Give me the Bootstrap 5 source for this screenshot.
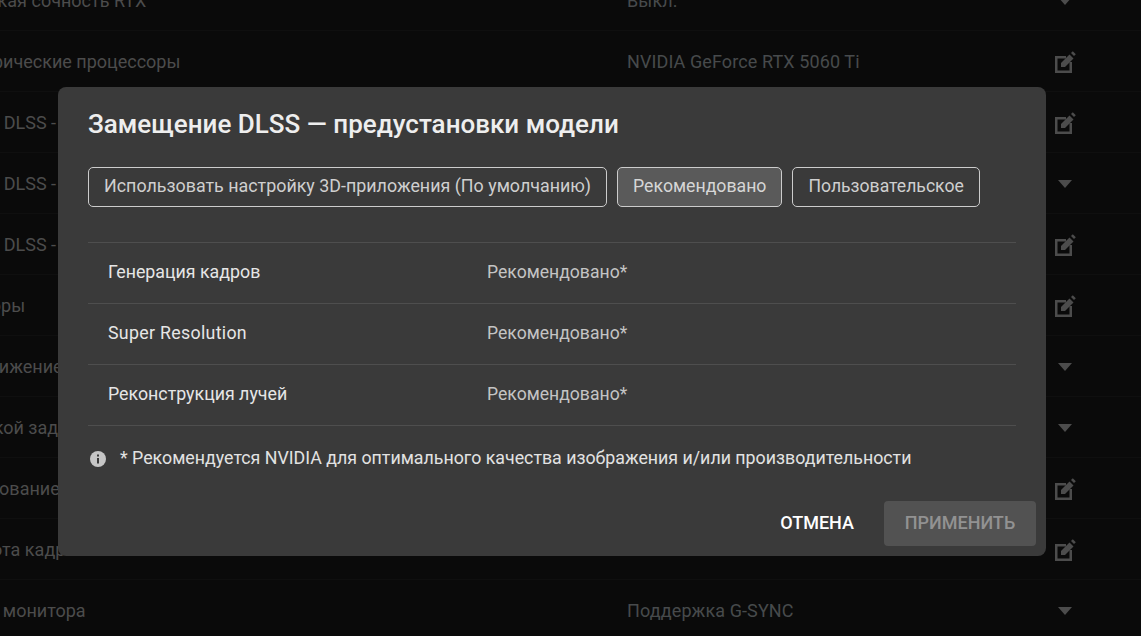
<!DOCTYPE html>
<html lang="ru">
<head>
  <meta charset="UTF-8">
  <meta name="viewport" content="width=device-width, initial-scale=1.0">
  <title>Замещение DLSS</title>
  <link href="https://cdn.jsdelivr.net/npm/bootstrap@5.3.0/dist/css/bootstrap.min.css" rel="stylesheet">
  <style>
    html, body {
      height: 100%;
    }
    body {
      background: #0a0a0a;
      font-family: Roboto, "Liberation Sans", sans-serif;
      overflow: hidden;
    }
    #settings-list {
      margin: -30px 0 0 -99px;
      width: 1240px;
    }
    .setting-row {
      height: 61px;
      border-bottom: 1px solid #0f0f0f;
      color: #4c4c4c;
      font-size: 18px;
    }
    .setting-name {
      width: 726px;
      padding-top: 1px;
      white-space: nowrap;
    }
    .setting-value {
      width: 413px;
      padding-top: 1px;
      color: #474a4c;
      letter-spacing: .1px;
    }
    .setting-icon {
      width: 50px;
      padding-top: 2px;
      fill: #4c4c4c;
    }
    #override-dialog {
      left: 58px;
      top: 87px;
      width: 988px;
      height: 469px;
      padding: 0 10px 10px 30px;
      background: #3a3a3a;
      border-radius: 8px;
    }
    #override-dialog h2 {
      margin: 22px 0 0;
      height: 58px;
      font-size: 26px;
      line-height: 30px;
      font-weight: 500;
      color: #eeeeee;
    }
    .preset-group {
      gap: 10px;
    }
    .preset-btn {
      height: 40px;
      padding: 0 15px 2px;
      font-size: 17.7px;
      color: #cfcfcf;
      border: 1px solid #cccccc;
      border-radius: 5px;
      white-space: nowrap;
    }
    .preset-btn:first-child {
      font-size: 17.87px;
    }
    .preset-btn:last-child {
      font-size: 17.6px;
    }
    .preset-btn.active, .preset-btn:hover {
      background: #5a5a5a;
      color: #d6d6d6;
      border-color: #cccccc;
    }
    #preset-table {
      margin: 35px 20px 0 0;
      border-top: 1px solid #4e4e4e;
    }
    .preset-row {
      height: 61px;
      padding: 0 0 2px 20px;
      border-bottom: 1px solid #4e4e4e;
      font-size: 17.8px;
    }
    .preset-name {
      width: 379px;
      color: #e6e6e6;
    }
    .preset-name-latin {
      letter-spacing: .3px;
    }
    .preset-value {
      color: #c4c4c4;
      font-size: 17.6px;
    }
    #preset-note {
      margin-top: 20px;
      height: 25px;
      gap: 12px;
      font-size: 17.8px;
      color: #e2e2e2;
    }
    #dialog-footer {
      gap: 30px;
    }
    #btn-cancel, #btn-apply {
      font-size: 18px;
      font-weight: 500;
      border: 0;
      border-radius: 4px;
      padding: 0 0 2px;
      height: 45px;
    }
    #btn-cancel {
      color: #ffffff;
    }
    #btn-apply {
      width: 152px;
      background: #525252;
      color: #929292;
      opacity: 1;
    }
  </style>
</head>
<body>

<svg width="0" height="0" class="position-absolute">
  <symbol id="icon-edit" viewBox="0 0 22 22">
    <path d="M1 5h11v2.5H3.5v12h12V11H18v11H1z"/>
    <path d="M7 16v-4l8.5-8.5 4 4L11 16z"/>
    <path d="M17 2l1.8-1.8 3 3L20 5z"/>
  </symbol>
  <symbol id="icon-caret" viewBox="0 0 14 8">
    <path d="M0 0h14L7 8z"/>
  </symbol>
</svg>

<!-- Settings behind the dialog -->
<div id="settings-list"></div>

<!-- Dialog -->
<div id="override-dialog" class="position-absolute d-flex flex-column">
  <h2>Замещение DLSS — предустановки модели</h2>

  <div class="d-flex preset-group">
    <button class="btn preset-btn">Использовать настройку 3D-приложения (По умолчанию)</button>
    <button class="btn preset-btn active">Рекомендовано</button>
    <button class="btn preset-btn">Пользовательское</button>
  </div>

  <div id="preset-table">
    <div class="preset-row d-flex align-items-center">
      <div class="preset-name">Генерация кадров</div>
      <div class="preset-value">Рекомендовано*</div>
    </div>
    <div class="preset-row d-flex align-items-center">
      <div class="preset-name preset-name-latin">Super Resolution</div>
      <div class="preset-value">Рекомендовано*</div>
    </div>
    <div class="preset-row d-flex align-items-center">
      <div class="preset-name">Реконструкция лучей</div>
      <div class="preset-value">Рекомендовано*</div>
    </div>
  </div>

  <div id="preset-note" class="d-flex align-items-center">
    <svg width="20" height="20" viewBox="0 0 20 20" class="flex-shrink-0">
      <circle cx="10" cy="10" r="8" fill="#c6c6c6"/>
      <rect x="9" y="9" width="2" height="5.5" fill="#3a3a3a"/>
      <rect x="9" y="5.5" width="2" height="2" fill="#3a3a3a"/>
    </svg>
    <span>* Рекомендуется NVIDIA для оптимального качества изображения и/или производительности</span>
  </div>

  <div id="dialog-footer" class="d-flex justify-content-end align-items-center mt-auto">
    <button class="btn" id="btn-cancel">ОТМЕНА</button>
    <button class="btn" id="btn-apply" disabled>ПРИМЕНИТЬ</button>
  </div>
</div>

<script>
  // Rows of the settings page under the dialog
  const settings = [
    ['Динамическая сочность RTX', 'Выкл.', 'caret'],
    ['Общие графические процессоры', 'NVIDIA GeForce RTX 5060 Ti', 'edit'],
    ['Замещение DLSS - предустановки', '', 'edit'],
    ['Замещение DLSS - режим', '', 'caret'],
    ['Замещение DLSS - модель', '', 'edit'],
    ['Аккумуляторы', '', 'edit'],
    ['Плавное снижение', '', 'caret'],
    ['Режим низкой задержки', '', 'caret'],
    ['Масштабирование', '', 'edit'],
    ['Макс. частота кадров', '', 'edit'],
    ['Технология монитора', 'Поддержка G-SYNC', 'caret']
  ];

  let listHtml = '';
  settings.forEach(item => {
    const size = item[2] === 'edit' ? 'width="22" height="22"' : 'width="14" height="8"';
    listHtml += `
      <div class="setting-row d-flex align-items-center">
        <div class="setting-name">${item[0]}</div>
        <div class="setting-value">${item[1]}</div>
        <div class="setting-icon text-center"><svg ${size} class="d-block mx-auto"><use href="#icon-${item[2]}"/></svg></div>
      </div>`;
  });
  document.getElementById('settings-list').innerHTML = listHtml;
</script>
<script src="https://cdn.jsdelivr.net/npm/bootstrap@5.3.0/dist/js/bootstrap.bundle.min.js"></script>
</body>
</html>
